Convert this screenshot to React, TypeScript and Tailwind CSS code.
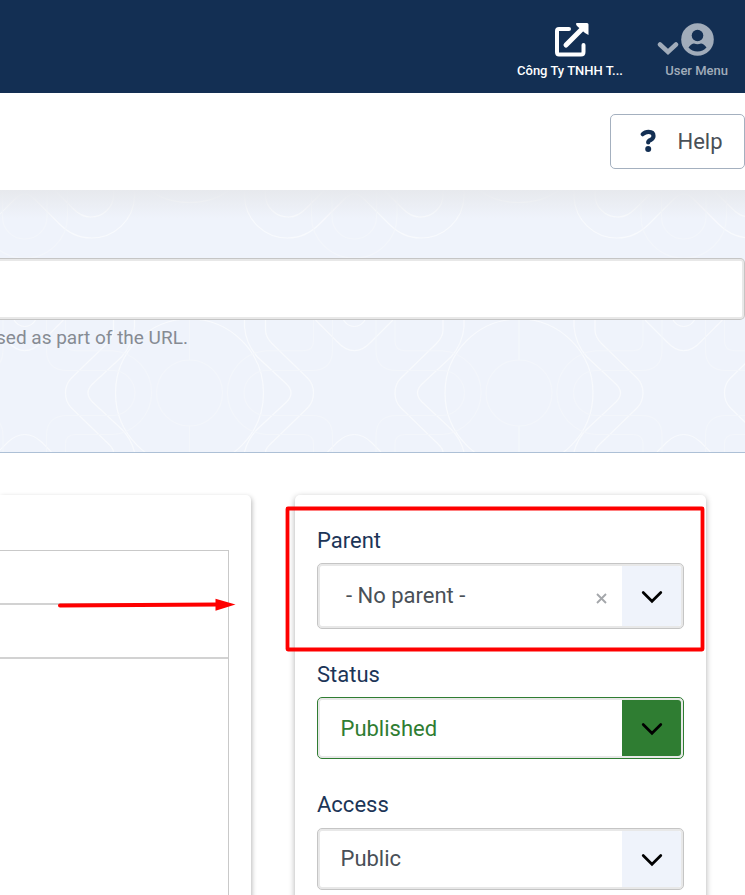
import React from "react";

const strong = { stroke: "#f8fafd", strokeWidth: 1.2, fill: "none" };
const faint = { stroke: "#f3f6fb", strokeWidth: 1.1, fill: "none" };

/* Right half of one ornament tile, measured from the tile's centre line and the band's top. */
function HalfTile() {
  return (
    <>
      <path {...strong} d="M0 12.5C16 12.5 29 8.500 40 0M76 0V5C76 17 86 27 99 27C106 27 111 24 116 19L135 0" />
      <path {...strong} d="M55 0V7C56 30 75 48 98 48C111 48 121 43 130 34L155 9Q160 4 164.750 4" />
      <path {...strong} d="M0 129A74 74 0 0 1 0 277" />
      <path {...strong} d="M76 126V140C76 146 79 150 83 154L118 188Q124 194 124 203Q124 212 118 218L83 252C79 256 76 258 76 262" />
      <path {...strong} d="M55 126V137C56 148 60 158 68 167L97 194Q106 203 97 212L68 239C60 247 57 254 55 262" />
      <path {...strong} d="M126 130L148 152Q156 160.700 164.750 160.700M154 130Q158 136.500 164.750 136.500M138 262L148 252Q156 244.500 164.750 244.500" />
      <path {...faint} d="M0 129V170M0 236V262M0 170A33 33 0 0 1 0 236M142.500 0V27A22 22 0 0 0 164.750 49M122 0V26A42 42 0 0 0 164.750 68" />
      <path {...faint} d="M143 125V160Q143 180.500 122 180.500H77A22.500 22.500 0 0 0 77 225.500H122Q143 225.500 143 246V262" />
      <path {...faint} d="M124 125V151Q124 160.700 114 160.700H77A42 42 0 0 0 77 244.500H114Q124 244.500 124 254V262" />
    </>
  );
}

function Ornament() {
  return (
    <svg className="absolute inset-0" width="745" height="262" viewBox="0 0 745 262" aria-hidden="true">
      {[-140, 189.5, 519, 848.5].map((x) => (
        <g key={x} transform={`translate(${x} 0)`}>
          <HalfTile />
          <g transform="scale(-1 1)">
            <HalfTile />
          </g>
        </g>
      ))}
    </svg>
  );
}

function Chevron() {
  return (
    <svg width="22" height="14" viewBox="0 0 22 14" fill="none" aria-hidden="true">
      <path d="M2.200 2.500L11 11.300L19.800 2.500" stroke="#000" strokeWidth="2.700" strokeLinecap="round" />
    </svg>
  );
}

type FieldProps = {
  label: string;
  value: string;
  tall?: boolean;
  green?: boolean;
  clearable?: boolean;
};

function Field({ label, value, tall, green, clearable }: FieldProps) {
  return (
    <div className="flex flex-col">
      <div className="h-[27px] text-[22px] leading-[27px] text-[#1c3557]">{label}</div>
      <div
        className={`flex items-stretch rounded-[5px] border bg-white p-[2px] shadow-[inset_0_0_0_2px_#e8e8e8] ${
          tall ? "mt-[9px] h-[66px]" : green ? "mt-[9px] h-[62px]" : "mt-[10px] h-[62px]"
        } ${green ? "border-[#2f7d32] text-[#2f7d32]" : "border-[#c5c5c5] text-[#495057]"}`}
      >
        <div
          className={`flex flex-1 items-center text-[22px] leading-none ${
            clearable ? "pb-px pl-[26px]" : green ? "pl-[20.500px] pt-px" : "pb-px pl-[20.500px]"
          }`}
        >
          {value}
        </div>
        {clearable && (
          <svg className="mr-[15px] mt-[27px]" width="11" height="11" viewBox="0 0 11 11" aria-hidden="true">
            <path d="M1 1L10 10M10 1L1 10" stroke="#a4a7ab" strokeWidth="1.900" />
          </svg>
        )}
        <div
          className={`flex items-center justify-center rounded-r-[3px] ${
            green ? "w-[59.500px] bg-[#2f7d32] pl-px" : "w-[59px] bg-[#eff3fb] pl-px"
          } ${tall ? "pt-0.5" : "pt-px"}`}
        >
          <Chevron />
        </div>
      </div>
    </div>
  );
}

export default function App() {
  return (
    <div className="relative flex h-[895px] w-[745px] flex-col overflow-hidden bg-white font-[Roboto,sans-serif]">
      <header className="flex h-[93px] shrink-0 justify-end bg-[#132f53] pr-[17px] text-[13px] font-medium leading-[16px]">
        <div className="mr-[32px] flex w-[108px] flex-col items-center pt-[23px] text-white">
          <svg className="mb-[6px] ml-[3px]" width="36" height="34" viewBox="0 0 36 34" fill="none" aria-hidden="true">
            <path d="M15 6H5Q3 6 3 8V29Q3 31.500 5 31.500H27Q29.500 31.500 29.500 29V22" stroke="currentColor" strokeWidth="4" strokeLinecap="round" />
            <path d="M12 22L29 5" stroke="currentColor" strokeWidth="5" strokeLinecap="round" />
            <path d="M23 0H33Q34.500 0 34.500 1.500V12L31 10L23 3Q21 0 23 0Z" fill="currentColor" />
          </svg>
          <span className="whitespace-nowrap">Công Ty TNHH T...</span>
        </div>
        <div className="flex w-[72px] flex-col items-end pt-[23px] text-[#a1acba]">
          <div className="mb-[6px] mr-[14px] flex h-[34px] items-start gap-[2px]">
            <svg className="mt-[18px]" width="22" height="15" viewBox="0 0 22 15" fill="none" aria-hidden="true">
              <path d="M3 3.500L11 11L19 3.500" stroke="currentColor" strokeWidth="4.500" strokeLinecap="round" />
            </svg>
            <svg width="33" height="33" viewBox="0 0 33 33" aria-hidden="true">
              <circle cx="16.500" cy="16.500" r="16.300" fill="currentColor" />
              <circle cx="16.500" cy="12.500" r="5.800" fill="#132f53" />
              <path d="M7.500 24.500Q10.500 20.500 13 20.500Q16.500 22 20 20.500Q22.500 20.500 25.500 24.500Q22 28.500 16.500 28.500Q11 28.500 7.500 24.500Z" fill="#132f53" />
            </svg>
          </div>
          <span className="whitespace-nowrap">User Menu</span>
        </div>
      </header>

      <div className="flex h-[97px] shrink-0 items-start justify-end bg-white pt-[21px]">
        <button className="flex h-[55px] w-[135px] items-center rounded-[5px] border border-[#a4b0bf] pl-[29px] text-[22px] text-[#495057]">
          <svg className="mb-[2px]" width="17" height="24" viewBox="0 0 17 24" fill="none" aria-hidden="true">
            <path d="M2.800 5.200Q5 2.800 8.500 2.800Q13.500 2.800 13.500 7Q13.500 9.500 10.500 11Q8.200 12 8.200 13.500" stroke="#132f53" strokeWidth="4.200" strokeLinecap="round" />
            <circle cx="8.200" cy="20" r="3" fill="#132f53" />
          </svg>
          <span className="ml-[20.500px]">Help</span>
        </button>
      </div>

      <section className="relative h-[263px] shrink-0 border-b border-[#adc0d6] bg-[#eff3fb]">
        <Ornament />
        <div className="relative h-[68px] bg-linear-to-b from-[#e7e9ed] to-transparent to-[42%]" />
        <div className="relative h-[62px] rounded-r-[5px] border border-l-0 border-[#c5c5c5] bg-white shadow-[inset_-2px_0_0_#e8e8e8,inset_0_2px_0_#e8e8e8,inset_0_-2px_0_#e8e8e8]" />
        <div className="relative -ml-1 mt-[6px] whitespace-nowrap text-[19px] leading-[24px] text-[#868b93]">sed as part of the URL.</div>
      </section>

      <main className="flex min-h-0 flex-1 gap-[44px] pt-[42px]">
        <div className="h-[420px] w-[251px] rounded-tr-[5px] bg-white pt-[55px] shadow-[1px_2px_5px_0_rgba(0,0,0,0.28)]">
          <div className="h-[400px] w-[229px] border-r border-t border-[#c9c9c9]">
            <div className="h-[54px] border-b-2 border-[#d2d2d2]" />
            <div className="h-[54px] border-b-2 border-[#d2d2d2]" />
          </div>
        </div>
        <div className="flex h-[420px] w-[411px] flex-col gap-[32px] rounded-t-[5px] bg-white px-[22px] pt-[32px] shadow-[0_2px_6px_0_rgba(0,0,0,0.32)]">
          <Field label="Parent" value="- No parent -" tall clearable />
          <Field label="Status" value="Published" green />
          <Field label="Access" value="Public" />
        </div>
      </main>

      <svg className="pointer-events-none absolute inset-0" width="745" height="895" viewBox="0 0 745 895" aria-hidden="true">
        <rect x="287.500" y="508.500" width="415" height="141" rx="0.500" fill="none" stroke="#fe0000" strokeWidth="3.800" strokeLinejoin="round" />
        <path d="M60 605.500L218 604.600" stroke="#fe0000" strokeWidth="4" strokeLinecap="round" />
        <path d="M215.500 598.800L235.500 604.600L215.500 610.800Z" fill="#fe0000" />
      </svg>
    </div>
  );
}
